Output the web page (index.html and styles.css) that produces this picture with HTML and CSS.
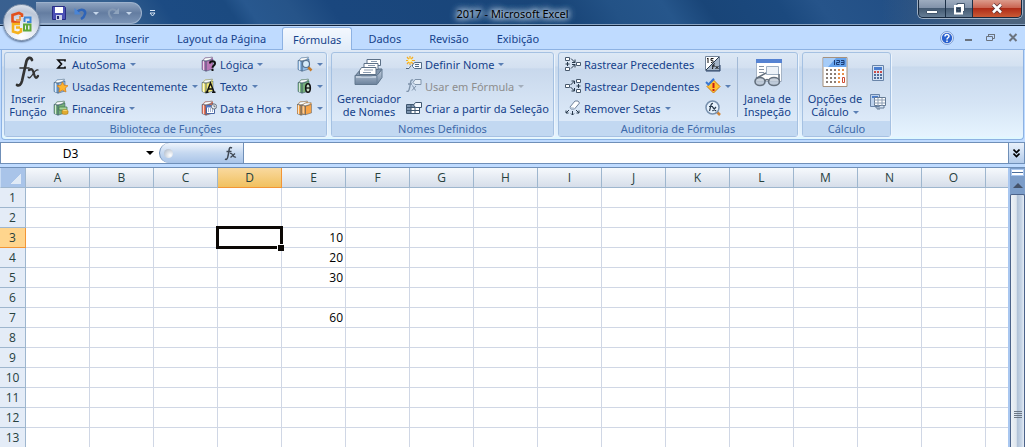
FILE: index.html
```
<!DOCTYPE html>
<html lang="pt-BR">
<head>
  <meta charset="UTF-8">
  <meta name="viewport" content="width=device-width, initial-scale=1.0">
  <title>2017 - Microsoft Excel</title>
  <link rel="stylesheet" href="styles.css">
</head>
<body>
  <svg class="defs" aria-hidden="true">
    <defs>
      <linearGradient id="tray" x1="0" y1="0" x2="0" y2="1"><stop offset="0" stop-color="#c3d0e0"/><stop offset="1" stop-color="#6c829c"/></linearGradient>
    </defs>
    <symbol id="book" viewBox="0 0 16 16">
      <path d="M1 4.500 4 1.500 11 .8 12 2v11l-7 2.200L1 13.500z" fill="currentColor"/>
      <path d="M1.500 4.500 4.500 2l7-.8-2.500 2.600-4 .9z" fill="#fff" stroke="#6b7c8c" stroke-width=".6"/>
      <path d="M1 4.500 5 5.500v9.700L1 13.500zM5 5.500 12 3.200V13l-7 2.200z" fill="none" stroke="#35506b" stroke-opacity=".55" stroke-width=".9"/>
      <path d="M2.500 5v9" stroke="#fff" stroke-opacity=".7"/>
    </symbol>
  </svg>

  <div class="window">
    <!-- barra de título -->
    <header class="titlebar">
      <div class="quick">
        <button class="office" aria-label="Botão Office">
          <svg width="24" height="24" viewBox="0 0 24 24" fill="none" stroke-width="2.600">
            <path d="M12 6V3.500L9 2 2.500 4v6.500l4 1H10" stroke="#e2501c"/>
            <path d="M6 9h4V5" stroke="#f08b28" stroke-width="1.600"/>
            <path d="M14 6.500h6.500V11H17M14.500 7v4" stroke="#3c86d8" stroke-width="2"/>
            <path d="M10 13H3v7.500L8 22l3-1.500V17M6 16.500h4" stroke="#f6b21d"/>
            <path d="M14 13.500h6.500v6H14zM17 14v5" stroke="#5fa83a" stroke-width="2"/>
          </svg>
        </button>
        <div class="quick-bar">
          <button aria-label="Salvar">
            <svg width="14" height="14" viewBox="0 0 14 14"><path d="M.5.500h12l1 1v12H.5z" fill="#4b50b5" stroke="#272c83"/><path d="M3 1h8v6H3z" fill="#fff"/><path d="M4 9h6v5H4z" fill="#c9d0e8"/><path d="M5 10h2v3H5z" fill="#23286f"/></svg>
          </button>
          <button aria-label="Desfazer">
            <svg width="13" height="13" viewBox="0 0 13 13" fill="none"><path d="M3 5c4-4 9-2 8 2-.5 2-2 4-4 5" stroke="#2e64b8" stroke-width="2.500"/><path d="M.5 1v6.500H7z" fill="#4b85d5"/></svg>
          </button>
          <i class="caret pale"></i>
          <button aria-label="Refazer">
            <svg width="13" height="13" viewBox="0 0 13 13" fill="none"><path d="M10 5C6 0 1 3 2 7c.5 2 1.500 3.500 3 4.500" stroke="#8499b4" stroke-width="2"/><path d="M12 1v6H6z" fill="#8ea3bd"/></svg>
          </button>
          <i class="caret pale"></i>
        </div>
        <button class="customize" aria-label="Personalizar">
          <svg width="7" height="8" viewBox="0 0 7 8"><path d="M1 .5h5M1 3h5L3.500 6z" stroke="#d8e5f4" fill="none"/></svg>
        </button>
      </div>
      <h1>2017 - Microsoft Excel</h1>
      <div class="controls">
        <button aria-label="Minimizar"><svg width="12" height="14" viewBox="0 0 12 14"><path d="M.5 8.500h11v3H.5z" fill="#fff" stroke="#42566d"/></svg></button>
        <button aria-label="Restaurar"><svg width="13" height="13" viewBox="0 0 13 13"><path d="M4 1.500h7.500v8H9V4H4z" fill="#fff" stroke="#42566d"/><path d="M2 4h7v7.500H2z" fill="#4b6078" stroke="#fff" stroke-width="2"/><path d="M4 6.500h3v2.500H4z" fill="none" stroke="#25374c"/></svg></button>
        <button class="close" aria-label="Fechar"><svg width="12" height="11" viewBox="0 0 12 11"><path d="m2 1.500 8 8m0-8-8 8" stroke="#5e3536" stroke-width="4"/><path d="m2 1.500 8 8m0-8-8 8" stroke="#fff" stroke-width="2.500"/></svg></button>
      </div>
    </header>

    <!-- guias -->
    <nav class="tabs">
      <a href="#">Início</a>
      <a href="#">Inserir</a>
      <a href="#">Layout da Página</a>
      <a href="#" class="active">Fórmulas</a>
      <a href="#">Dados</a>
      <a href="#">Revisão</a>
      <a href="#">Exibição</a>
      <div class="doc-controls">
        <button aria-label="Ajuda"><svg width="14" height="14" viewBox="0 0 14 14"><circle cx="7" cy="7" r="6.400" fill="#fff" stroke="#6f93cf"/><circle cx="7" cy="7" r="5.200" fill="#2b62cf"/><path d="M5 5.500C5 3 9 3 9 5.300 9 6.800 7 6.800 7 8.500M7 9.500v1.600" stroke="#fff" stroke-width="1.500" fill="none"/></svg></button>
        <button aria-label="Minimizar pasta"><svg width="9" height="9" viewBox="0 0 9 9"><path d="M1 7h7" stroke="#6b737e" stroke-width="2"/></svg></button>
        <button aria-label="Restaurar pasta"><svg width="9" height="9" viewBox="0 0 9 9"><path d="M2.500 3V1.500h6v4H7M.5 3.500h6v4h-6zM2 1.500h7" stroke="#6b737e" fill="none"/></svg></button>
        <button aria-label="Fechar pasta"><svg width="10" height="9" viewBox="0 0 10 9"><path d="m1.500 1 7 7m0-7-7 7" stroke="#6b737e" stroke-width="2"/></svg></button>
      </div>
    </nav>

    <!-- faixa de opções -->
    <main class="ribbon">
      <section class="group library">
        <div class="tools">
          <button class="big">
            <svg width="30" height="34" viewBox="0 0 30 34"><g fill="none" stroke="#333" stroke-linecap="round"><path d="M19 5c-1-3-4-3-5.500 1L9 26c-1 4-3 5-5 4" stroke-width="2.700"/><path d="M7 13h9" stroke-width="1.600"/><path d="M16 15c3-2 4 0 5 4s2 5 4 2" stroke-width="2.300"/><path d="M25 15c-2-1-3 1-5 4s-4 5-5 3" stroke-width="1.300"/></g></svg>
            <span>Inserir<br>Função</span>
          </button>
          <div class="stack">
            <button><svg width="16" height="16" viewBox="0 0 16 16"><path d="M12 5.500V4H5l3.500 4L5 12h7v-1.500" fill="none" stroke="#111" stroke-width="1.700"/></svg>AutoSoma<i class="caret"></i></button>
            <button><svg class="blue" width="16" height="16" viewBox="0 0 16 16"><use href="#book"/><path d="m9.500 4 1.600 3.200 3.900.5-2.800 2.500.8 3.800-3.500-1.900L6 14l.7-3.800L4 7.700l3.900-.5z" fill="#ffb52e" stroke="#d77b12" stroke-width=".7"/></svg>Usadas Recentemente<i class="caret"></i></button>
            <button><svg class="green" width="16" height="16" viewBox="0 0 16 16"><use href="#book"/><path d="M6 7h8v3H6z" fill="#a6d39a" stroke="#3b7445" stroke-width=".7"/><ellipse cx="12" cy="11" rx="3" ry="1.400" fill="#ffe07a" stroke="#a67813" stroke-width=".6"/><path d="M9 11v2.500c1 1.200 5 1.200 6 0V11" fill="#e1ab31" stroke="#a67813" stroke-width=".6"/></svg>Financeira<i class="caret"></i></button>
          </div>
          <div class="stack">
            <button><svg class="purple" width="16" height="16" viewBox="0 0 16 16"><use href="#book"/><path d="M9 7.500c0-3 5-3 5 0 0 2-2.500 2-2.500 4.300M11.500 13v2" stroke="#111" stroke-width="2" fill="none"/></svg>Lógica<i class="caret"></i></button>
            <button><svg class="yellow" width="16" height="16" viewBox="0 0 16 16"><use href="#book"/><path d="m6 14 3.500-9L13 14M7.500 11h4M4.500 14.300h3M11 14.300h3.500" stroke="#111" stroke-width="1.500" fill="none"/></svg>Texto<i class="caret"></i></button>
            <button><svg class="red" width="16" height="16" viewBox="0 0 16 16"><use href="#book"/><path d="M5.500 5.500h8v8h-8z" fill="#fff" stroke="#4766a4"/><path d="M5 6.500h9" stroke="#5579c4" stroke-width="2"/><path d="M7 9h5M7 11h5" stroke="#4766a4" stroke-dasharray="1 1"/><circle cx="13" cy="6.500" r="2.600" fill="#e9f0f7" stroke="#6a7480"/><path d="M13 5v1.700h1.500" stroke="#333" stroke-width=".6" fill="none"/></svg>Data e Hora<i class="caret"></i></button>
          </div>
          <div class="stack">
            <button aria-label="Pesquisa e Referência"><svg class="blue" width="16" height="16" viewBox="0 0 16 16"><use href="#book"/><path d="m11 11 3.500 3.500" stroke="#c67b2a" stroke-width="2.500"/><circle cx="9" cy="8" r="3.500" fill="#d6ebfa" stroke="#55718e" stroke-width="1.200"/></svg><i class="caret"></i></button>
            <button aria-label="Matemática e Trigonometria"><svg class="green" width="16" height="16" viewBox="0 0 16 16"><use href="#book"/><ellipse cx="11" cy="10" rx="2.300" ry="4.300" fill="#c5dfca" stroke="#111" stroke-width="1.600"/><path d="M9 10h4" stroke="#111" stroke-width="1.300"/></svg><i class="caret"></i></button>
            <button aria-label="Mais Funções"><svg class="orange" width="16" height="16" viewBox="0 0 16 16"><use href="#book" x="-1" width="16" height="16"/><use href="#book" x="4" y="1" width="14" height="15"/></svg><i class="caret"></i></button>
          </div>
        </div>
        <h2>Biblioteca de Funções</h2>
      </section>

      <section class="group names">
        <div class="tools">
          <button class="big">
            <svg width="32" height="34" viewBox="0 0 32 34"><path d="m2 21 6-7h21l-5 7z" fill="#8296ad" stroke="#5b7087"/><g fill="#fff" stroke="#5d7187"><path d="M14 4.500h13.500v6H14z"/><path d="M11 8.500h14v6H11z"/><path d="M8.500 12.500H23v7H6.500v-4z"/></g><path d="M18 6.500h6M15 10.500h7M11 15h9M10 17.500h8" stroke="#8b9cb0"/><path d="M2 20.500h5l2 1h9l2-1h4l5-6v8l-5 7H2z" fill="url(#tray)" stroke="#62788f"/><path d="M3 22h20" stroke="#e8f1fb"/><path d="M24 21v8" stroke="#6b819a"/></svg>
            <span>Gerenciador<br>de Nomes</span>
          </button>
          <div class="stack">
            <button><svg width="16" height="16" viewBox="0 0 16 16"><path d="M4 0v9M0 4.500h9M1 1l6 7M7 1 1 8" stroke="#f6ad20" stroke-width="1.200"/><circle cx="4" cy="4.500" r="2" fill="#fff6a8"/><path d="m6.500 9 2-2.500h7v6h-7l-2-2zM0 12.500h3l2-3" fill="#f5f9ff" stroke="#536b86"/><path d="M9 8.500h4M9 10.500h4" stroke="#536b86"/></svg>Definir Nome<i class="caret"></i></button>
            <button disabled><svg width="16" height="16" viewBox="0 0 16 16" fill="none" stroke="#7f93aa"><path d="M7 2C4 1 5 5 3.500 10c-.5 3-1.500 4-3 3M2 6h4" stroke-width="1.400"/><path d="M6 8c2-1 2 5 4 4m0-4-4 4.500"/><path d="m7 4.500 2-3h6v5H9z" fill="#e5edf6"/></svg>Usar em Fórmula<i class="caret"></i></button>
            <button><svg width="16" height="16" viewBox="0 0 16 16"><path d="M.5 4.500h13v9H.5z" fill="#fff" stroke="#3e566f"/><path d="M1 5h12v2H1zM1 7h4v6H1z" fill="#7d94af"/><path d="M.5 7.500h13M.5 10.500h13M5 4v10M9 4v10" stroke="#3e566f"/><path d="m7.500 5 2-2.500h6v5h-6z" fill="#f5f9ff" stroke="#3e566f"/></svg>Criar a partir da Seleção</button>
          </div>
        </div>
        <h2>Nomes Definidos</h2>
      </section>

      <section class="group audit">
        <div class="tools">
          <div class="stack">
            <button><svg width="16" height="16" viewBox="0 0 16 16" fill="none" stroke="#48596d"><path d="M.5 1.500h4v3h-4zM.5 11.500h4v3h-4zM11.500 6.500h4v3h-4z" fill="#fff"/><path d="M2.500 6v4M.5 8h4M6 2.500l4 4m0-3v3H7M6 12.500l4-4m0 3v-3H7" stroke="#27384b"/></svg>Rastrear Precedentes</button>
            <button><svg width="16" height="16" viewBox="0 0 16 16" fill="none" stroke="#48596d"><path d="M11.500 1.500h4v3h-4zM11.500 11.500h4v3h-4zM.5 6.500h4v3h-4z" fill="#fff"/><path d="M13.500 6v4M11.500 8h4M5.500 7l4-4m-3 0h3v3M5.500 9l4 4m-3 0h3v-3" stroke="#27384b"/></svg>Rastrear Dependentes</button>
            <button><svg width="16" height="16" viewBox="0 0 16 16" fill="none"><path d="m5 7 5-6h3l1.500 2-5 6H6z" fill="#fff" stroke="#70829a"/><path d="m5 7 4 .5.500 1.500H6z" fill="#b4c2d3"/><path d="m4 10-3 3m0-2.500V13h2.500M7.500 11v4M6 13.500 7.500 15 9 13.500M11 10l3 3m0-2.500V13h-2.500" stroke="#27384b"/></svg>Remover Setas<i class="caret"></i></button>
          </div>
          <div class="stack">
            <button aria-label="Mostrar Fórmulas"><svg width="16" height="16" viewBox="0 0 16 16"><path d="M.5.500h14v14H.5z" fill="#fff" stroke="#718399"/><path d="M14 1v13H1z" fill="#a5b5c8"/><path d="M1 14 14 1" stroke="#26384b"/><path d="M2 3l1-1v5M8.500 2.500H6v2c3-1 3 2 0 2M10 8c-2-1-2 2-2.500 5M7 10h3M10.500 10l3 3m0-3-3 3" stroke="#111" fill="none"/><path d="M1 15h14V9" stroke="#253c63" fill="none"/></svg></button>
            <button aria-label="Verificação de Erros"><svg width="16" height="16" viewBox="0 0 16 16"><path d="m8.500 2 6.500 6.500L8.500 15 2 8.500z" fill="#ffc331" stroke="#ce7b12"/><path d="M8.500 5v5M8.500 11v2" stroke="#c91b13" stroke-width="2"/><path d="m1 4 2.500 2.500L9 .8" stroke="#3978d2" stroke-width="2" fill="none"/></svg><i class="caret"></i></button>
            <button aria-label="Avaliar Fórmula"><svg width="16" height="16" viewBox="0 0 16 16"><path d="m11 11 4 4" stroke="#d18335" stroke-width="2.500"/><circle cx="7.500" cy="7.500" r="6.500" fill="#e7f2fd" stroke="#7891ae" stroke-width="1.500"/><path d="M8 3.500C5.500 3 6 6 4.500 11M4 6.500h4M7.500 7l3.500 4m0-4-3.500 4" stroke="#28394c" stroke-width="1.200" fill="none"/></svg></button>
          </div>
          <button class="big watch">
            <svg width="30" height="34" viewBox="0 0 30 34"><path d="M3.500 4.500h25v22h-25z" fill="#fff" stroke="#a5b4c6"/><path d="M3 4h26v4H3z" fill="#5582d2"/><path d="M6 11.500h5M6 14.500h5M6 17.500h5" stroke="#8492a4"/><path d="M13.500 11.500h12v8h-12z" fill="#edf2f8" stroke="#9eafc2"/><g fill="#bac6d3" fill-opacity=".8" stroke="#64707e" stroke-width="1.600"><ellipse cx="7" cy="26.500" rx="5" ry="4"/><ellipse cx="21" cy="26.500" rx="5.500" ry="4"/><path d="M12 26c1-2 3-2 4 0M3 23.500 13 18M26 25v-6" fill="none"/></g></svg>
            <span>Janela de<br>Inspeção</span>
          </button>
        </div>
        <h2>Auditoria de Fórmulas</h2>
      </section>

      <section class="group calc">
        <div class="tools">
          <button class="big">
            <svg width="26" height="34" viewBox="0 0 26 34"><path d="M1 2.500h24v29H1z" fill="#fff" stroke="#a6917d"/><path d="M1.500 3h23v9h-23z" fill="#66a3ed"/><path d="M1.500 3H14L6 12H1.500z" fill="#a6ccf8"/><path d="M12.500 5v5M14.500 5.500h3v2h-3v2h3M19 5.500h3v4h-3M19 7.500h3" stroke="#1b3c75" fill="none"/><g fill="none" stroke-width="2"><path d="M4 15h18M4 19h18M4 23h14M4 27h14" stroke="#8b7e76" stroke-dasharray="2 2"/><path d="M16 15h6M16 19h6M16 23h2M16 27h2" stroke="#e5904b" stroke-dasharray="2 2"/></g><path d="M20.500 22.500h2v5h-2z" fill="#fff" stroke="#ce4b32"/></svg>
            <span>Opções de<br>Cálculo<i class="caret"></i></span>
          </button>
          <div class="stack wide">
            <button aria-label="Calcular Agora"><svg width="16" height="16" viewBox="0 0 16 16"><path d="M2.500.500h11v15h-11z" fill="#d4e2f4" stroke="#6984a8"/><path d="M4 2h8v3H4z" fill="#4a7dce"/><path d="M4 7h9" stroke="#c94c49" stroke-width="2" stroke-dasharray="2 1"/><path d="M4 10h9M4 13h9" stroke="#516e9a" stroke-width="2" stroke-dasharray="2 1"/></svg></button>
            <button aria-label="Calcular Planilha"><svg width="16" height="16" viewBox="0 0 16 16"><path d="M.5.500h9v12h-9z" fill="#bdd2ed" stroke="#6984a8"/><path d="M2 2h6v2H2z" fill="#4a7dce"/><path d="M4.500 3.500h11v8h-11z" fill="#fff" stroke="#657b95"/><path d="M4 6h11M4 9h11M8 4v8M12 4v8" stroke="#8c9eb4"/><path d="M6 12v2h8v-2M7 15h3" stroke="#657b95" fill="none"/></svg></button>
          </div>
        </div>
        <h2>Cálculo</h2>
      </section>
    </main>

    <!-- barra de fórmulas -->
    <div class="formula-bar">
      <input class="name-box" aria-label="Caixa de nome" value="D3">
      <button class="name-arrow" aria-label="Nomes"><i class="caret"></i></button>
      <div class="fx-area">
        <span class="knob"></span>
        <button aria-label="Inserir função"><svg width="13" height="15" viewBox="0 0 13 15" fill="none" stroke="#3f4854"><path d="M8 2C4.500 0 5.500 4 4 10c-.5 3-1.500 4-3 3M2.500 5.500h5" stroke-width="1.500"/><path d="M6 7.500c3-1.500 2.500 5 6 3.500M11 7.500 6.500 11.500" stroke-width="1.300"/></svg></button>
      </div>
      <input class="formula" aria-label="Fórmula">
      <button class="expand" aria-label="Expandir"><svg width="7" height="9" viewBox="0 0 7 9"><path d="M.5.500l3 3 3-3M.5 4.500l3 3 3-3" stroke="#000" stroke-width="1.600" fill="none"/></svg></button>
    </div>

    <!-- planilha -->
    <div class="sheet">
      <div class="grid">
        <table>
          <thead><tr id="columns"></tr></thead>
          <tbody id="rows"></tbody>
        </table>
      </div>
      <div class="scrollbar">
        <span class="split"></span>
        <button class="up" aria-label="Rolar para cima"></button>
        <div class="thumb"><span class="grip"></span></div>
      </div>
    </div>
  </div>
  <script src="script.js"></script>
</body>
</html>
```
FILE: styles.css
```
* {
  box-sizing: border-box;
}
body {
  margin: 0;
  font-family: "Noto Sans", "Open Sans", sans-serif;
  font-size: 11px;
  color: #15428b;
  background: #bfdbff;
  overflow: hidden;
}
button, input {
  font: inherit;
  color: inherit;
  border: 0;
  padding: 0;
  margin: 0;
  background: none;
}
svg {
  display: block;
  flex: none;
}
.defs {
  position: absolute;
  width: 0;
  height: 0;
}
.window {
  display: flex;
  flex-direction: column;
  height: 100vh;
}
.caret {
  display: inline-block;
  flex: none;
  border: 3px solid transparent;
  border-top-color: #5a7fb4;
  border-bottom: 0;
  margin-left: 4px;
  vertical-align: 2px;
}
.caret.pale {
  border-top-color: #c5d6ea;
}

/* barra de título */
.titlebar {
  display: grid;
  grid-template-columns: 1fr auto 1fr;
  height: 26px;
  flex: none;
  border-bottom: 1px solid #10233c;
  box-shadow: inset 0 -1px #8ba5c3;
  background:
    linear-gradient(90deg, transparent 86%, #4d647e 98%),
    linear-gradient(55deg, #3a6090 0, #35608f 12%, #1c4b83 17%, #1b4a80 23%, #28588f 25%, #265489 29%, #1a477e 33%, #194578 55%, #235286 60%, #26568b 65%, #194578 69%, #1b497e 76%, #26548a 80%, #1c477e 100%);
}
.quick {
  display: flex;
  align-items: flex-start;
  padding-left: 3px;
}
.office {
  position: relative;
  z-index: 2;
  width: 37px;
  height: 37px;
  margin-top: 4px;
  display: flex;
  align-items: center;
  justify-content: center;
  border-radius: 50%;
  border: 1px solid #7d90aa;
  background: radial-gradient(circle at 50% 90%, #fff 0, #e6ebf3 35%, #bcc7d8 70%, #eef2f8 100%);
  box-shadow: 0 1px 2px #51698c;
}
.quick-bar {
  display: flex;
  align-items: center;
  height: 22px;
  width: 106px;
  margin: 2px 0 0 -4px;
  padding-left: 16px;
  border: 1px solid #9db2cd;
  border-left: 0;
  border-radius: 0 12px 12px 0;
  background: linear-gradient(#8da2bf, #647da1 50%, #7b94b6);
}
.quick-bar button {
  margin-right: 8px;
}
.quick-bar button + .caret {
  margin: 0 8px 0 -2px;
}
.customize {
  margin: 10px 0 0 7px;
}
.titlebar h1 {
  margin: 0;
  padding: 0 12px;
  font-size: 11px;
  font-weight: normal;
  line-height: 27px;
  color: #000;
  text-shadow: 0 0 5px #dfebf8, 0 0 7px #d2e1f2, 0 0 8px #c2d5ea, 0 0 10px #a9c1dc;
}
.controls {
  display: flex;
  justify-self: end;
  height: 18px;
  margin-right: 3px;
  border: 1px solid #17293f;
  border-top: 0;
  border-radius: 0 0 5px 5px;
  box-shadow: 0 0 0 1px #9fb0c4;
  overflow: hidden;
}
.controls button {
  display: flex;
  align-items: center;
  justify-content: center;
  width: 27px;
  border-right: 1px solid #1c3047;
  background: linear-gradient(#9dacbf, #8293aa 45%, #445a72 50%, #667d95);
}
.controls .close {
  width: 48px;
  border: 0;
  background: linear-gradient(#dc9b8b, #ca6552 45%, #af2c17 50%, #c95a36);
}

/* guias */
.tabs {
  display: flex;
  align-items: flex-end;
  height: 24px;
  flex: none;
  padding-left: 45px;
  border-bottom: 1px solid #8db2e3;
  background: #bfdbff;
}
.tabs a {
  height: 22px;
  padding: 0 14px;
  line-height: 24px;
  color: #15428b;
  text-decoration: none;
  white-space: nowrap;
}
.tabs .active {
  padding: 0 10px;
  margin: 0 2px -1px;
  height: 23px;
  border: 1px solid #8db2e3;
  border-bottom: 0;
  border-radius: 3px 3px 0 0;
  background: linear-gradient(#f3f8fe, #e1ecf9);
}
.doc-controls {
  display: flex;
  align-items: center;
  align-self: center;
  gap: 13px;
  margin-left: auto;
  padding-right: 7px;
}
.doc-controls button:first-child {
  margin-right: -3px;
}

/* faixa de opções */
.ribbon {
  display: flex;
  gap: 4px;
  height: 90px;
  flex: none;
  margin: 0 1px;
  padding: 2px;
  border: 1px solid #8db2e3;
  border-top: 0;
  border-radius: 0 0 4px 4px;
  background: linear-gradient(#dfe9f5, #d3e1f1 18%, #c8d9ed 19%, #d5e4f5 60%, #e7f5ff);
  box-shadow: inset 0 -2px #dff8ff;
}
.group {
  display: flex;
  flex: none;
  flex-direction: column;
  height: 85px;
  border: 1px solid #a5c1e2;
  border-radius: 3px;
  background: linear-gradient(#dde8f5, #d3e0f0 18%, #c8d8ec 19%, #dce9f8 80%);
  box-shadow: 1px 1px #edf5fd;
}
.library { width: 323px; }
.names { width: 223px; }
.audit { width: 240px; }
.calc { width: 89px; }
.group h2 {
  margin: 0;
  height: 15px;
  font-size: 11px;
  font-weight: normal;
  line-height: 15px;
  text-align: center;
  color: #3e6aaa;
  background: #c2d8f1;
}
.tools {
  display: flex;
  flex: 1;
}
.tools button {
  white-space: nowrap;
}
.big {
  display: flex;
  flex: none;
  flex-direction: column;
  align-items: center;
  line-height: 13px;
  padding-top: 2px;
}
.big span {
  margin-top: 3px;
}
.library .big { width: 46px; }
.names .big { width: 74px; }
.calc .big { width: 64px; }
.stack {
  display: flex;
  flex: none;
  flex-direction: column;
}
.stack button {
  display: flex;
  align-items: center;
  gap: 3px;
  height: 22px;
}
.stack button .caret {
  margin-left: 1px;
}
.stack button:disabled {
  color: #8d8d8d;
}
.stack button:disabled .caret {
  border-top-color: #a3aebc;
}
.library .stack {
  width: 148px;
  margin-left: 2px;
}
.library .stack + .stack {
  width: 96px;
  margin: 0;
}
.library .stack:last-child {
  width: auto;
}
.audit .stack {
  width: 140px;
  margin-left: 6px;
}
.audit .stack + .stack {
  width: 32px;
  margin: 0;
}
.watch {
  width: 60px;
  height: 60px;
  margin-top: 4px;
  padding: 0;
  border-left: 1px solid #a2b9d6;
}
.watch svg {
  margin-top: -2px;
}
.stack.wide {
  justify-content: center;
  gap: 7px;
  padding-left: 3px;
}
.blue { color: #91bce8; }
.green { color: #76b07a; }
.purple { color: #ba78b6; }
.yellow { color: #f5ea76; }
.red { color: #ef7455; }
.orange { color: #f7a448; }

/* barra de fórmulas */
.formula-bar {
  display: flex;
  height: 22px;
  flex: none;
  margin-top: 2px;
  border: 1px solid #6f8fb8;
  background: #fff;
  color: #000;
  font-size: 12px;
}
.name-box {
  width: 139px;
  text-align: center;
}
.name-arrow {
  display: flex;
  align-items: center;
  justify-content: center;
  width: 19px;
}
.name-arrow .caret {
  margin: 0;
  border-width: 4px 4px 0;
  border-top-color: #000;
}
.fx-area {
  display: flex;
  align-items: center;
  justify-content: space-between;
  width: 85px;
  padding: 0 6px 0 4px;
  border-left: 1px solid #6f8fb8;
  border-right: 1px solid #6f8fb8;
  border-radius: 10px 0 0 10px;
  background: linear-gradient(#eef4fc, #c5d8f0 50%, #a9c4e8);
}
.knob {
  width: 9px;
  height: 9px;
  border-radius: 50%;
  background: radial-gradient(circle at 70% 70%, #fff, #a7b3c4);
}
.formula {
  flex: 1;
  min-width: 0;
}
.expand {
  display: flex;
  align-items: center;
  justify-content: center;
  width: 16px;
  border-left: 1px solid #6f8fb8;
  background: linear-gradient(#e9f1fb, #b3cbea);
}

/* planilha */
.sheet {
  display: flex;
  flex: 1;
  min-height: 0;
  margin-top: 3px;
  border-top: 1px solid #6f8fb8;
}
.grid {
  flex: 1;
  min-width: 0;
  overflow: hidden;
  background: #fff;
}
table {
  width: 100%;
  table-layout: fixed;
  border-collapse: separate;
  border-spacing: 0;
  font-family: "Open Sans", "Noto Sans", sans-serif;
  font-size: 12px;
  color: #000;
}
th, td {
  height: 20px;
  padding: 1px 2px 0;
  line-height: 18px;
  border: 0 solid #d0d7e5;
  border-width: 0 1px 1px 0;
}
td {
  position: relative;
  text-align: right;
}
th {
  width: 64px;
  font-weight: normal;
  color: #27413e;
  border-color: #9eb6ce;
  background: linear-gradient(#f6f9fc, #d6deea);
}
th:first-child {
  width: 26px;
  background: #e4ecf7;
}
th:last-child {
  width: auto;
}
thead th:last-child, td:last-child {
  border-right: 0;
}
thead th:first-child {
  background: linear-gradient(135deg, transparent 50%, #e0eaf6 50%) right 4px bottom 3px / 11px 11px no-repeat, #a9c4e9;
  border-left: 1px solid #c9dcf4;
}
thead th.current {
  border-color: #f29536;
  background: linear-gradient(#f9d99f, #f1c15f);
}
tbody th.current {
  border-color: #f29536;
  background: #ffd58d;
}
.selection {
  position: absolute;
  z-index: 1;
  inset: -2px;
  border: 3px solid #0c0805;
}
.selection::after {
  content: "";
  position: absolute;
  right: -4px;
  bottom: -5px;
  width: 6px;
  height: 6px;
  border: 1px solid #fff;
  border-width: 1px 0 0 1px;
  background: #0c0805;
}

/* barra de rolagem */
.scrollbar {
  display: flex;
  flex-direction: column;
  width: 17px;
  border-left: 2px solid #a9c7f0;
  background: #7c9dc9;
}
.split {
  height: 7px;
  margin: 1px 1px 0;
  border: 1px solid #a9c7f0;
  background: linear-gradient(#fff 2px, #4b6d9b 2px, #4b6d9b 3px, #fff 3px) no-repeat;
}
.up {
  height: 18px;
}
.up::before {
  content: "";
  display: block;
  width: 0;
  margin: 0 auto;
  border: 5px solid transparent;
  border-top: 0;
  border-bottom-color: #45536a;
}
.thumb {
  flex: 1;
  display: flex;
  flex-direction: column;
  justify-content: flex-end;
  align-items: center;
  padding-bottom: 29px;
  border: 1px solid #4c638a;
  border-bottom: 0;
  border-radius: 2px 2px 0 0;
  background: linear-gradient(90deg, #edf2f7, #dfe6ee 40%, #b2c3d8 50%, #c7d5e6 80%, #e5edf6);
}
.grip {
  width: 8px;
  height: 7px;
  background: repeating-linear-gradient(#6d7785 0 1px, transparent 1px 2px);
}
```
FILE: script.js
```
const columns = 'ABCDEFGHIJKLMNO'.split('').concat('');
const values = { E3: 10, E4: 20, E5: 30, E7: 60 };
const rowCount = 13;

const head = document.getElementById('columns');
head.innerHTML = '<th></th>' + columns
  .map(c => `<th${c === 'D' ? ' class="current"' : ''}>${c}</th>`).join('');

const body = document.getElementById('rows');
for (let r = 1; r <= rowCount; r++) {
  const cells = columns.map(c => {
    const id = c + r;
    return `<td>${values[id] || ''}${id === 'D3' ? '<span class="selection"></span>' : ''}</td>`;
  }).join('');
  body.insertAdjacentHTML('beforeend', `<tr><th${r === 3 ? ' class="current"' : ''}>${r}</th>${cells}</tr>`);
}
```
